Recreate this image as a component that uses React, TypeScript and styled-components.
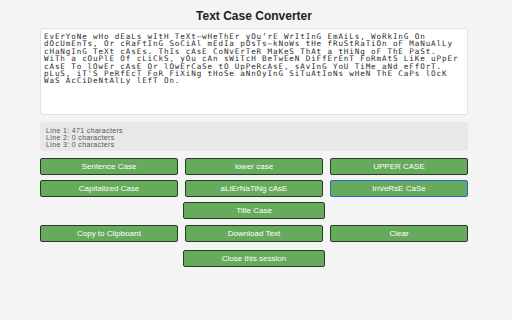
import React from "react";
import styled, { createGlobalStyle } from "styled-components";

const Global = createGlobalStyle`
  html, body { margin: 0; padding: 0; background: #f4f4f4; }
  body { font-family: "Liberation Sans", Arial, sans-serif; }
`;

const Page = styled.div`
  padding: 9px 44px 0 40px;
  display: flex;
  flex-direction: column;
`;

const Title = styled.h1`
  margin: 0 0 5px;
  font-size: 12px;
  font-weight: bold;
  text-align: center;
  color: #222;
  line-height: 14px;
`;

const Editor = styled.textarea`
  box-sizing: border-box;
  width: 100%;
  height: 87px;
  margin: 0;
  padding: 4px 3px;
  border: 1px solid #e2e2e2;
  border-radius: 3px;
  background: #fff;
  resize: none;
  outline: none;
  font-family: "DejaVu Sans Mono", monospace;
  font-size: 7.6px;
  letter-spacing: 0.88px;
  line-height: 7.4px;
  color: #2a2a2a;
  overflow: hidden;
  white-space: pre;
`;

const Stats = styled.div`
  margin-top: 7px;
  box-sizing: border-box;
  height: 29px;
  padding: 5px 6px;
  background: #e8e8e8;
  border-radius: 3px;
  font-size: 7px;
  letter-spacing: 0.35px;
  line-height: 7px;
  color: #555;
`;

const Grid = styled.div<{ $top: number }>`
  display: grid;
  grid-template-columns: repeat(3, 1fr);
  column-gap: 7px;
  margin-top: ${(p) => p.$top}px;
`;

const Center = styled.div<{ $top: number }>`
  display: flex;
  justify-content: center;
  margin-top: ${(p) => p.$top}px;
`;

const Btn = styled.button<{ $focus?: boolean; $wide?: boolean }>`
  box-sizing: border-box;
  height: 17px;
  width: ${(p) => (p.$wide ? "33%" : "auto")};
  padding: 0;
  border: 1px solid ${(p) => (p.$focus ? "#2f62d8" : "#2c3a2a")};
  border-radius: 2px;
  background: #66aa5c;
  color: #fff;
  font-family: "Liberation Sans", Arial, sans-serif;
  font-size: 8px;
  line-height: 15px;
  text-align: center;
  cursor: pointer;
`;

const TEXT = [
  "EvErYoNe wHo dEaLs wItH TeXt—wHeThEr yOu’rE WrItInG EmAiLs, WoRkInG On",
  "dOcUmEnTs, Or cRaFtInG SoCiAl mEdIa pOsTs—kNoWs tHe fRuStRaTiOn oF MaNuAlLy",
  "cHaNgInG TeXt cAsEs. ThIs cAsE CoNvErTeR MaKeS ThAt a tHiNg oF ThE PaSt.",
  "WiTh a cOuPlE Of cLiCkS, yOu cAn sWiTcH BeTwEeN DiFfErEnT FoRmAtS LiKe uPpEr",
  "cAsE To lOwEr cAsE Or lOwErCaSe tO UpPeRcAsE, sAvInG YoU TiMe aNd eFfOrT.",
  "pLuS, iT'S PeRfEcT FoR FiXiNg tHoSe aNnOyInG SiTuAtIoNs wHeN ThE CaPs lOcK",
  "WaS AcCiDeNtAlLy lEfT On.",
].join("\n");

export default function App() {
  return (
    <>
      <Global />
      <Page>
        <Title>Text Case Converter</Title>
        <Editor defaultValue={TEXT} spellCheck={false} wrap="off" />
        <Stats>
          <div>Line 1: 471 characters</div>
          <div>Line 2: 0 characters</div>
          <div>Line 3: 0 characters</div>
        </Stats>
        <Grid $top={7}>
          <Btn>Sentence Case</Btn>
          <Btn>lower case</Btn>
          <Btn>UPPER CASE</Btn>
        </Grid>
        <Grid $top={5}>
          <Btn>Capitalized Case</Btn>
          <Btn>aLtErNaTiNg cAsE</Btn>
          <Btn $focus>InVeRsE CaSe</Btn>
        </Grid>
        <Center $top={5}>
          <Btn $wide>Title Case</Btn>
        </Center>
        <Grid $top={6}>
          <Btn>Copy to Clipboard</Btn>
          <Btn>Download Text</Btn>
          <Btn>Clear</Btn>
        </Grid>
        <Center $top={8}>
          <Btn $wide>Close this session</Btn>
        </Center>
      </Page>
    </>
  );
}
